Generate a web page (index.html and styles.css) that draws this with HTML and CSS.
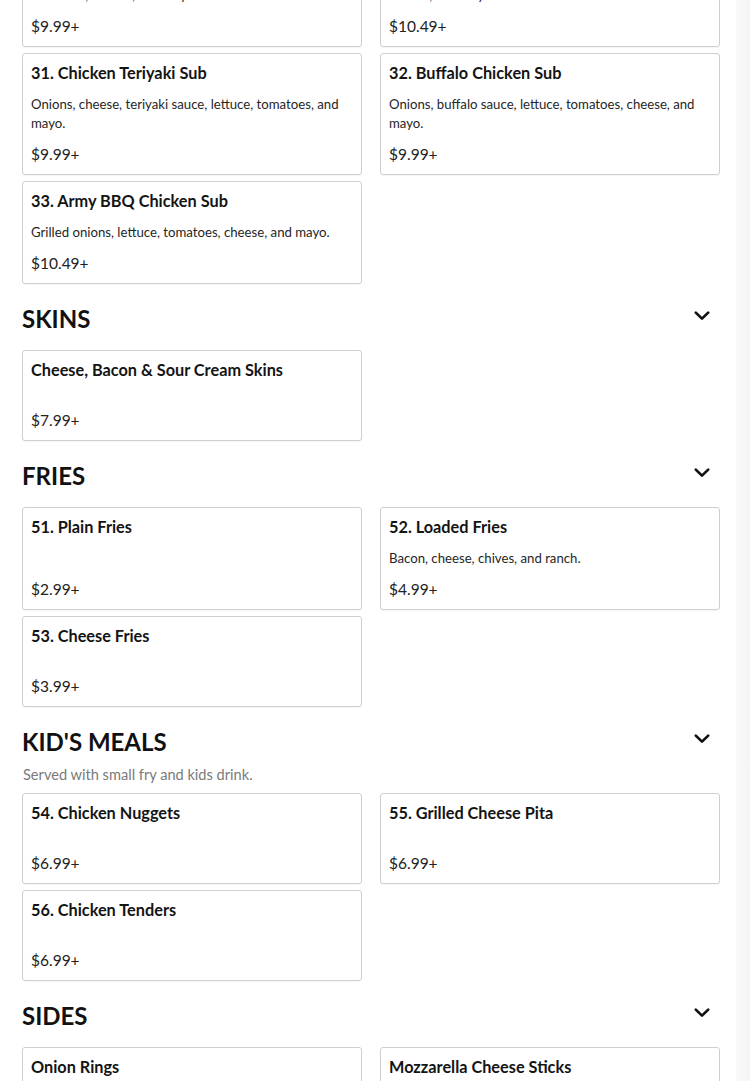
FILE: index.html
```html
<!DOCTYPE html>
<html lang="en">
<head>
<meta charset="utf-8">
<title>Menu</title>
<link rel="stylesheet" href="styles.css">
</head>
<body>
<div class="page">
  <main class="menu">
    <section class="category category--scrolled">
      <div class="grid">
        <article class="card">
          <div class="info">
            <h3 class="title">29. Grilled Chicken Sub</h3>
            <p class="desc">Grilled chicken, onions, peppers, mushrooms, lettuce, tomatoes, cheese, and mayo.</p>
          </div>
          <div class="price">$9.99+</div>
        </article>
        <article class="card">
          <div class="info">
            <h3 class="title">30. Chicken Bacon Ranch Sub</h3>
            <p class="desc">Grilled chicken, bacon, ranch, onions, lettuce, tomatoes, cheese, and mayo.</p>
          </div>
          <div class="price">$10.49+</div>
        </article>
        <article class="card">
          <div class="info">
            <h3 class="title">31. Chicken Teriyaki Sub</h3>
            <p class="desc">Onions, cheese, teriyaki sauce, lettuce, tomatoes, and mayo.</p>
          </div>
          <div class="price">$9.99+</div>
        </article>
        <article class="card">
          <div class="info">
            <h3 class="title">32. Buffalo Chicken Sub</h3>
            <p class="desc">Onions, buffalo sauce, lettuce, tomatoes, cheese, and mayo.</p>
          </div>
          <div class="price">$9.99+</div>
        </article>
        <article class="card">
          <div class="info">
            <h3 class="title">33. Army BBQ Chicken Sub</h3>
            <p class="desc">Grilled onions, lettuce, tomatoes, cheese, and mayo.</p>
          </div>
          <div class="price">$10.49+</div>
        </article>
      </div>
    </section>

    <section class="category">
      <header class="category-header">
        <h2 class="category-title">SKINS</h2>
        <svg class="chevron" viewBox="0 0 24 24" width="24" height="24" aria-hidden="true"><path d="M5.8 7.6 L12 13.6 L18.2 7.6" /></svg>
      </header>
      <div class="grid">
        <article class="card">
          <div class="info">
            <h3 class="title">Cheese, Bacon &amp; Sour Cream Skins</h3>
          </div>
          <div class="price">$7.99+</div>
        </article>
      </div>
    </section>

    <section class="category">
      <header class="category-header">
        <h2 class="category-title">FRIES</h2>
        <svg class="chevron" viewBox="0 0 24 24" width="24" height="24" aria-hidden="true"><path d="M5.8 7.6 L12 13.6 L18.2 7.6" /></svg>
      </header>
      <div class="grid">
        <article class="card">
          <div class="info">
            <h3 class="title">51. Plain Fries</h3>
          </div>
          <div class="price">$2.99+</div>
        </article>
        <article class="card">
          <div class="info">
            <h3 class="title">52. Loaded Fries</h3>
            <p class="desc">Bacon, cheese, chives, and ranch.</p>
          </div>
          <div class="price">$4.99+</div>
        </article>
        <article class="card">
          <div class="info">
            <h3 class="title">53. Cheese Fries</h3>
          </div>
          <div class="price">$3.99+</div>
        </article>
      </div>
    </section>

    <section class="category category--with-note">
      <header class="category-header">
        <h2 class="category-title">KID'S MEALS</h2>
        <svg class="chevron" viewBox="0 0 24 24" width="24" height="24" aria-hidden="true"><path d="M5.8 7.6 L12 13.6 L18.2 7.6" /></svg>
      </header>
      <p class="category-note">Served with small fry and kids drink.</p>
      <div class="grid">
        <article class="card">
          <div class="info">
            <h3 class="title">54. Chicken Nuggets</h3>
          </div>
          <div class="price">$6.99+</div>
        </article>
        <article class="card">
          <div class="info">
            <h3 class="title">55. Grilled Cheese Pita</h3>
          </div>
          <div class="price">$6.99+</div>
        </article>
        <article class="card">
          <div class="info">
            <h3 class="title">56. Chicken Tenders</h3>
          </div>
          <div class="price">$6.99+</div>
        </article>
      </div>
    </section>

    <section class="category">
      <header class="category-header">
        <h2 class="category-title">SIDES</h2>
        <svg class="chevron" viewBox="0 0 24 24" width="24" height="24" aria-hidden="true"><path d="M5.8 7.6 L12 13.6 L18.2 7.6" /></svg>
      </header>
      <div class="grid">
        <article class="card">
          <div class="info">
            <h3 class="title">Onion Rings</h3>
          </div>
          <div class="price">$4.99+</div>
        </article>
        <article class="card">
          <div class="info">
            <h3 class="title">Mozzarella Cheese Sticks</h3>
          </div>
          <div class="price">$6.99+</div>
        </article>
      </div>
    </section>
  </main>
  <div class="scroll-strip"></div>
</div>
</body>
</html>
```

FILE: styles.css
```css
* {
  box-sizing: border-box;
}

html, body {
  margin: 0;
  padding: 0;
  background: #ffffff;
  overflow: hidden;
}

body {
  font-family: "Lato", "Open Sans", "Liberation Sans", sans-serif;
  color: #1a1a1a;
}

.page {
  display: flex;
  width: 750px;
  height: 1081px;
  overflow: hidden;
}

.menu {
  width: 736px;
  flex: 0 0 736px;
  padding-left: 22px;
}

.scroll-strip {
  flex: 1 1 auto;
  background: linear-gradient(to right, #f9f9f9, #f4f4f4);
}

.category {
  padding-top: 17px;
}

.category--scrolled {
  padding-top: 0;
  margin-top: -75px;
}

.category-header {
  display: flex;
  justify-content: space-between;
  align-items: flex-start;
  width: 698px;
  margin-bottom: 13px;
}

.category-title {
  margin: 0;
  font-size: 24px;
  line-height: 36px;
  font-weight: 700;
  color: #111111;
}

.chevron {
  width: 24px;
  height: 24px;
  margin-right: 6px;
  margin-top: 4px;
  fill: none;
  stroke: #111111;
  stroke-width: 2.7;
  stroke-linecap: round;
  stroke-linejoin: round;
}

.category--with-note .category-header {
  margin-bottom: 5px;
}

.category-note {
  margin: 0 0 8px 0;
  font-size: 14.6px;
  line-height: 20px;
  color: #7a7a7a;
  padding-left: 1px;
}

.grid {
  display: grid;
  grid-template-columns: 340px 340px;
  column-gap: 18px;
  row-gap: 6px;
}

.card {
  display: flex;
  flex-direction: column;
  border: 1px solid #cfcfcf;
  border-radius: 3px;
  padding: 7px 8px 8px 8px;
  background: #ffffff;
  box-shadow: 0 1px 1px rgba(0, 0, 0, 0.04);
}

.info {
  min-height: 41px;
}

.title {
  margin: 0;
  font-size: 16.3px;
  line-height: 24px;
  font-weight: 700;
  color: #141414;
}

.desc {
  margin: 10px 0 0 0;
  font-size: 13.2px;
  line-height: 19px;
  color: #262626;
}

.price {
  margin-top: auto;
  padding-top: 9px;
  font-size: 15.5px;
  line-height: 24px;
  color: #222222;
}
```
